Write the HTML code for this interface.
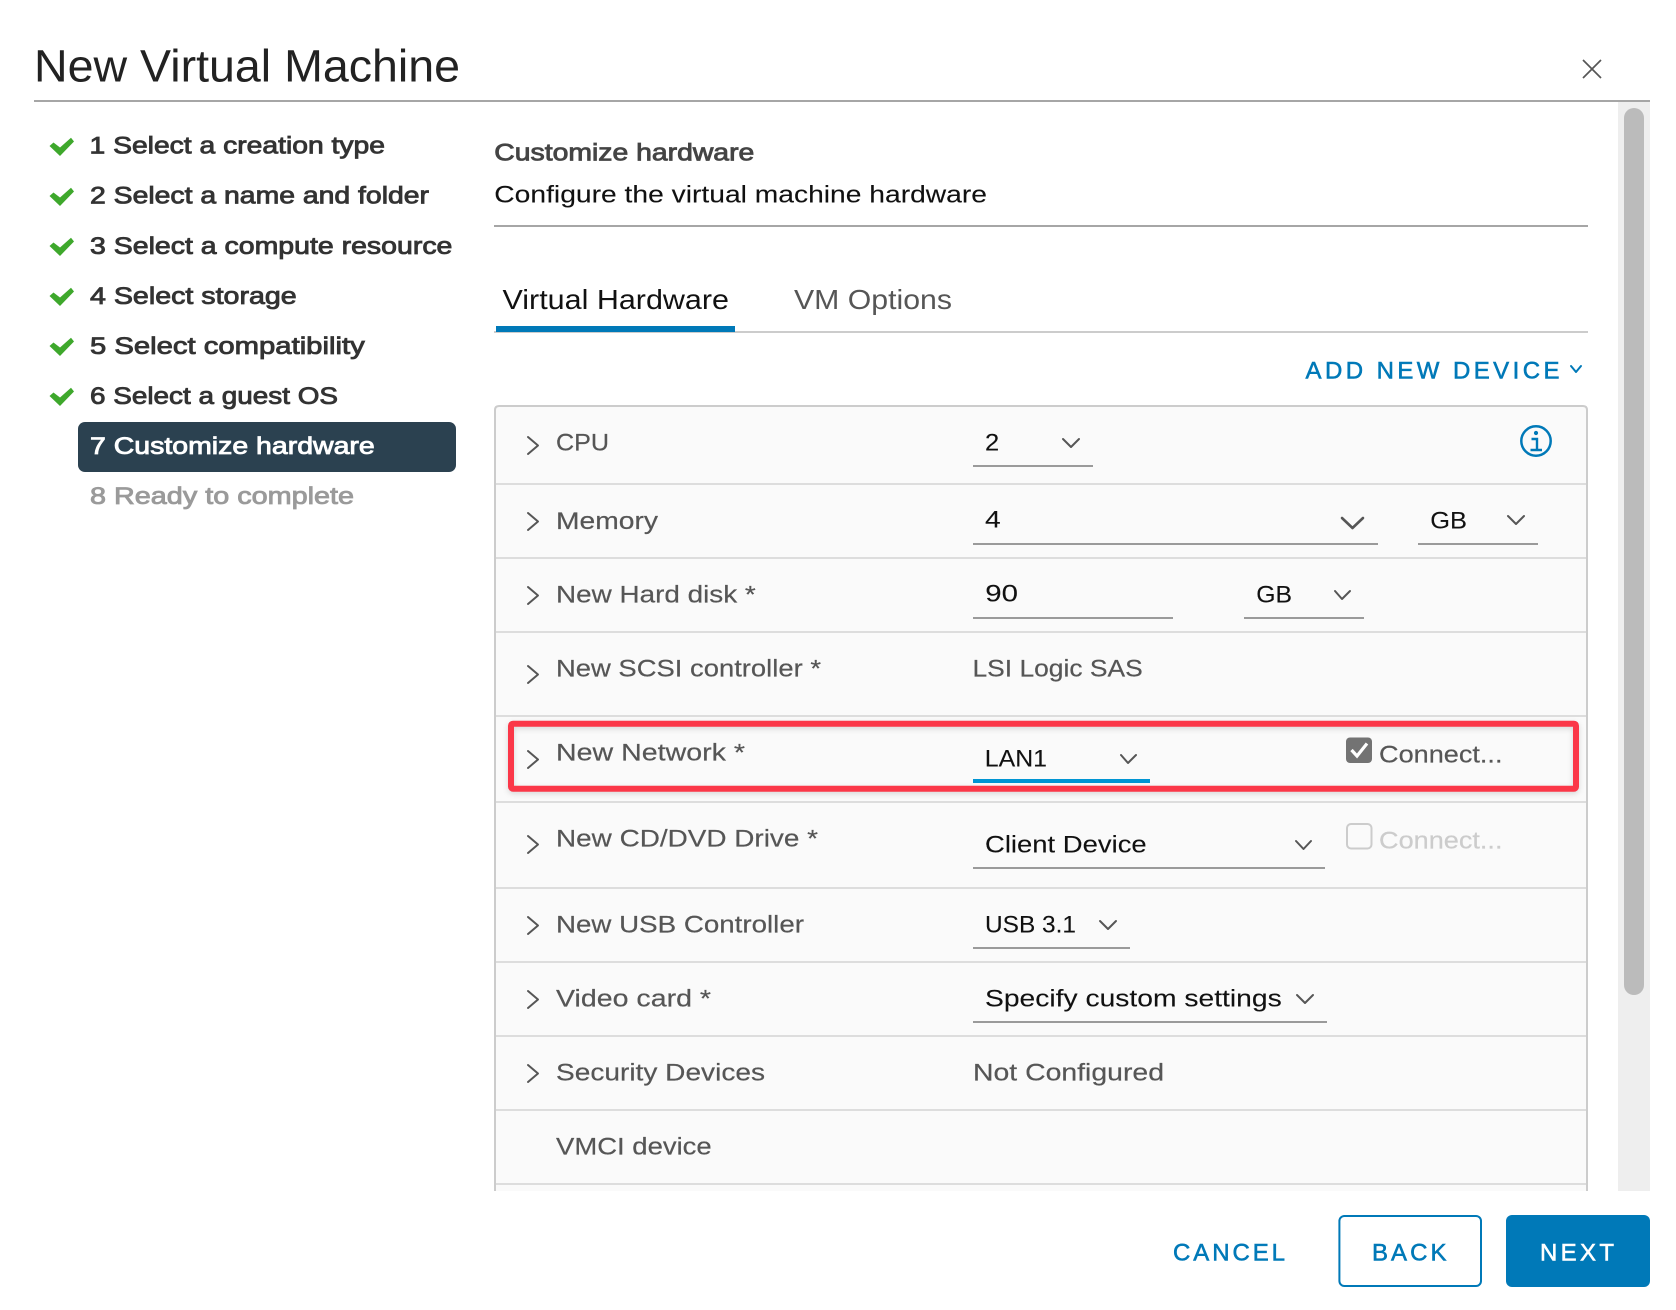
<!DOCTYPE html>
<html lang="en">
<head>
<meta charset="utf-8">
<title>New Virtual Machine</title>
<style>
html,body{margin:0;padding:0;background:#fff;width:1676px;height:1310px;overflow:hidden}
svg{display:block}
text{font-family:"Liberation Sans",sans-serif;font-size:24.5px;fill:#565656}
.w{fill:#333;stroke:#333;stroke-width:.85}
.l{fill:#565656;stroke:#565656;stroke-width:.2}
.v{fill:#111;stroke:#111;stroke-width:.1}
.b{font-size:24px;fill:#0079b8;stroke:#0079b8;stroke-width:.55}
.ch{fill:none;stroke:#565656;stroke-width:2;stroke-linecap:round;stroke-linejoin:round}
</style>
</head>
<body>
<svg width="1676" height="1310" viewBox="0 0 1676 1310" xmlns="http://www.w3.org/2000/svg">
<rect width="1676" height="1310" fill="#fff"/>

<!-- header -->
<text x="34" y="81.5" style="font-size:45px;fill:#222" textLength="426" lengthAdjust="spacingAndGlyphs">New Virtual Machine</text>
<rect x="34" y="100" width="1616" height="2" fill="#a6a6a6"/>
<path d="M1583 60L1601 78M1601 60L1583 78" fill="none" stroke="#565656" stroke-width="1.7"/>

<!-- scrollbar -->
<rect x="1618" y="102" width="32" height="1089" fill="#eee"/>
<rect x="1624" y="108" width="20" height="887" rx="10" fill="#bbb"/>

<!-- wizard steps -->
<g fill="#3ea82c">
<path d="M49.5 146L53.5 142.5L60 147.5L71 137.7L74 141.5L60 156Z"/>
<path d="M49.5 196L53.5 192.5L60 197.5L71 187.7L74 191.5L60 206Z"/>
<path d="M49.5 246L53.5 242.5L60 247.5L71 237.7L74 241.5L60 256Z"/>
<path d="M49.5 296L53.5 292.5L60 297.5L71 287.7L74 291.5L60 306Z"/>
<path d="M49.5 346L53.5 342.5L60 347.5L71 337.7L74 341.5L60 356Z"/>
<path d="M49.5 396L53.5 392.5L60 397.5L71 387.7L74 391.5L60 406Z"/>
</g>
<rect x="78" y="422" width="378" height="50" rx="7" fill="#2b4150"/>
<text class="w" x="89.5" y="153.5" textLength="295.5" lengthAdjust="spacingAndGlyphs">1 Select a creation type</text>
<text class="w" x="90" y="203.6" textLength="339" lengthAdjust="spacingAndGlyphs">2 Select a name and folder</text>
<text class="w" x="90" y="254" textLength="362.4" lengthAdjust="spacingAndGlyphs">3 Select a compute resource</text>
<text class="w" x="90" y="304" textLength="206.7" lengthAdjust="spacingAndGlyphs">4 Select storage</text>
<text class="w" x="90" y="354" textLength="274.7" lengthAdjust="spacingAndGlyphs">5 Select compatibility</text>
<text class="w" x="90" y="404" textLength="248" lengthAdjust="spacingAndGlyphs">6 Select a guest OS</text>
<text class="w" x="90" y="454" textLength="284.7" lengthAdjust="spacingAndGlyphs" style="fill:#fff;stroke:#fff">7 Customize hardware</text>
<text class="w" x="90" y="504" textLength="264" lengthAdjust="spacingAndGlyphs" style="fill:#9a9a9a;stroke:#9a9a9a">8 Ready to complete</text>

<!-- page title -->
<text class="w" x="494.3" y="160.7" textLength="260" lengthAdjust="spacingAndGlyphs" style="fill:#444;stroke:#444">Customize hardware</text>
<text x="494.3" y="202.7" style="fill:#111;stroke:#111;stroke-width:.1" textLength="492.7" lengthAdjust="spacingAndGlyphs">Configure the virtual machine hardware</text>
<rect x="494" y="225" width="1094" height="2" fill="#a6a6a6"/>

<!-- tabs -->
<rect x="494" y="331" width="1094" height="2" fill="#ccc"/>
<rect x="496" y="326" width="239" height="6" fill="#0079b8"/>
<text x="502.5" y="309" style="font-size:27.5px;fill:#111" textLength="226.5" lengthAdjust="spacingAndGlyphs">Virtual Hardware</text>
<text x="794" y="309" style="font-size:27.5px;fill:#565656" textLength="158" lengthAdjust="spacingAndGlyphs">VM Options</text>

<!-- add new device -->
<text class="b" x="1305.5" y="378.3" textLength="254" lengthAdjust="spacing">ADD NEW DEVICE</text>
<path d="M1571 366L1576 372L1581 366" fill="none" stroke="#0079b8" stroke-width="2" stroke-linecap="round" stroke-linejoin="round"/>

<!-- table -->
<path d="M495 1191V410Q495 406 499 406H1583Q1587 406 1587 410V1191" fill="#fafafa" stroke="#ccc" stroke-width="2"/>
<g stroke="#ddd" stroke-width="2">
<path d="M496 484H1586M496 558H1586M496 632H1586M496 716H1586M496 802H1586M496 888H1586M496 962H1586M496 1036H1586M496 1110H1586M496 1184H1586"/>
</g>

<!-- row chevrons -->
<g>
<path class="ch" d="M528 437L538 445.5L528 454"/>
<path class="ch" d="M528 513L538 521.5L528 530"/>
<path class="ch" d="M528 587L538 595.5L528 604"/>
<path class="ch" d="M528 666L538 674.5L528 683"/>
<path class="ch" d="M528 751L538 759.5L528 768"/>
<path class="ch" d="M528 836L538 844.5L528 853"/>
<path class="ch" d="M528 917L538 925.5L528 934"/>
<path class="ch" d="M528 991L538 999.5L528 1008"/>
<path class="ch" d="M528 1065L538 1073.5L528 1082"/>
</g>

<!-- row labels -->
<text class="l" x="556" y="450.7" textLength="53" lengthAdjust="spacingAndGlyphs">CPU</text>
<text class="l" x="556" y="529" textLength="102" lengthAdjust="spacingAndGlyphs">Memory</text>
<text class="l" x="556" y="602.7" textLength="199.7" lengthAdjust="spacingAndGlyphs">New Hard disk *</text>
<text class="l" x="556" y="676.7" textLength="265" lengthAdjust="spacingAndGlyphs">New SCSI controller *</text>
<text class="l" x="556" y="760.7" textLength="189" lengthAdjust="spacingAndGlyphs">New Network *</text>
<text class="l" x="556" y="846.7" textLength="262" lengthAdjust="spacingAndGlyphs">New CD/DVD Drive *</text>
<text class="l" x="556" y="932.3" textLength="248" lengthAdjust="spacingAndGlyphs">New USB Controller</text>
<text class="l" x="556" y="1006.7" textLength="155" lengthAdjust="spacingAndGlyphs">Video card *</text>
<text class="l" x="556" y="1080.7" textLength="209" lengthAdjust="spacingAndGlyphs">Security Devices</text>
<text class="l" x="556" y="1154.7" textLength="155.7" lengthAdjust="spacingAndGlyphs">VMCI device</text>

<!-- values -->
<text class="v" x="985" y="450.7" textLength="14.2" lengthAdjust="spacingAndGlyphs">2</text>
<text class="v" x="985" y="527.7" textLength="15.7" lengthAdjust="spacingAndGlyphs">4</text>
<text class="v" x="1430.3" y="528.5" textLength="36.7" lengthAdjust="spacingAndGlyphs">GB</text>
<text class="v" x="985.3" y="601.7" textLength="32.7" lengthAdjust="spacingAndGlyphs">90</text>
<text class="v" x="1256.3" y="602.3" textLength="35.7" lengthAdjust="spacingAndGlyphs">GB</text>
<text class="l" x="972.5" y="676.7" textLength="170.2" lengthAdjust="spacingAndGlyphs">LSI Logic SAS</text>
<text class="v" x="984.8" y="766.7" textLength="62.2" lengthAdjust="spacingAndGlyphs">LAN1</text>
<text class="v" x="985" y="852.7" textLength="161.7" lengthAdjust="spacingAndGlyphs">Client Device</text>
<text class="v" x="985" y="932.7" textLength="91" lengthAdjust="spacingAndGlyphs">USB 3.1</text>
<text class="v" x="985" y="1006.7" textLength="296.7" lengthAdjust="spacingAndGlyphs">Specify custom settings</text>
<text class="l" x="973" y="1080.7" textLength="191" lengthAdjust="spacingAndGlyphs">Not Configured</text>

<!-- value chevrons -->
<g>
<path class="ch" d="M1063 439L1071 447L1079 439"/>
<path class="ch" d="M1342 518L1352.5 528L1363 518" style="stroke-width:2.6"/>
<path class="ch" d="M1508 516L1516 524L1524 516"/>
<path class="ch" d="M1335 591L1342 599L1350 591"/>
<path class="ch" d="M1121 755L1128 763L1136 755"/>
<path class="ch" d="M1296 841L1303.5 849L1311 841"/>
<path class="ch" d="M1100 921L1108 929L1116 921"/>
<path class="ch" d="M1297 995L1305 1003L1313 995"/>
</g>

<!-- underlines -->
<g fill="#9a9a9a">
<rect x="973" y="465" width="120" height="2"/>
<rect x="973" y="543" width="405" height="2"/>
<rect x="1418" y="543" width="120" height="2"/>
<rect x="973" y="617" width="200" height="2"/>
<rect x="1244" y="617" width="120" height="2"/>
<rect x="973" y="867" width="352" height="2"/>
<rect x="973" y="947" width="157" height="2"/>
<rect x="973" y="1021" width="354" height="2"/>
</g>
<rect x="973" y="779" width="177" height="4" fill="#0095d3"/>

<!-- connect checkboxes -->
<rect x="1346" y="737.5" width="26" height="25.5" rx="4" fill="#737373"/>
<path d="M1351.5 750L1357 756L1367 743.5" fill="none" stroke="#fff" stroke-width="3.2"/>
<text class="l" x="1379" y="762.3" textLength="123.5" lengthAdjust="spacingAndGlyphs">Connect...</text>
<rect x="1347" y="824" width="24.5" height="24.5" rx="4" fill="none" stroke="#ccc" stroke-width="2"/>
<text x="1379" y="848.3" style="fill:#ccc;stroke:#ccc;stroke-width:.2" textLength="123.5" lengthAdjust="spacingAndGlyphs">Connect...</text>

<!-- info icon -->
<circle cx="1536" cy="441" r="14.7" fill="none" stroke="#0079b8" stroke-width="2.5"/>
<circle cx="1536" cy="433" r="2.1" fill="#0079b8"/>
<path d="M1531.5 439H1537V450M1530.5 450H1542" fill="none" stroke="#0079b8" stroke-width="2.4"/>

<!-- red highlight -->
<rect x="511" y="723.7" width="1065" height="65" rx="2" fill="none" stroke="#fb3748" stroke-width="6" style="filter:drop-shadow(0 2px 3px rgba(0,0,0,.14))"/>

<!-- footer -->
<rect x="1100" y="1191" width="576" height="119" fill="#fff"/>
<text class="b" x="1173" y="1260.7" textLength="112" lengthAdjust="spacing">CANCEL</text>
<rect x="1339.4" y="1216" width="141.6" height="70" rx="5" fill="#fff" stroke="#0079b8" stroke-width="2"/>
<text class="b" x="1372" y="1260.7" textLength="74.5" lengthAdjust="spacing">BACK</text>
<rect x="1506" y="1215" width="144" height="72" rx="6" fill="#0079b8"/>
<text class="b" x="1540" y="1260.7" textLength="74" lengthAdjust="spacing" style="fill:#fff;stroke:#fff">NEXT</text>
</svg>
</body>
</html>
